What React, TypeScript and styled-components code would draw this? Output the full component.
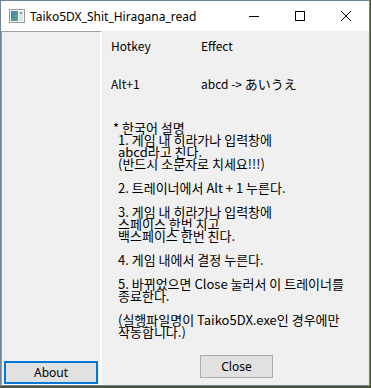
import React from 'react'
import styled, { createGlobalStyle } from 'styled-components'

const GlobalStyle = createGlobalStyle`
  html, body {
    margin: 0;
    padding: 0;
    background: #4a5637;
  }
  body {
    width: 371px;
    height: 388px;
    overflow: hidden;
  }
`

const Window = styled.div`
  width: 370px;
  height: 386px;
  box-sizing: border-box;
  border: 1px solid #6f8398;
  background: #fff;
  display: flex;
  flex-direction: column;
`

const TitleBar = styled.div`
  height: 30px;
  flex-shrink: 0;
  display: flex;
  align-items: center;
  background: #fff;
`

const AppIcon = styled.svg`
  margin-left: 8px;
  flex-shrink: 0;
`

const Title = styled.span`
  margin-left: 5px;
  font: 12px 'Noto Sans', 'Open Sans', sans-serif;
  color: #000;
`

const Controls = styled.div`
  margin-left: auto;
  display: flex;
  height: 100%;
`

const CaptionButton = styled.div`
  width: 46px;
  height: 100%;
  display: flex;
  align-items: center;
  justify-content: center;
`

const Client = styled.div`
  flex: 1;
  display: flex;
  background: #f0f0f0;
`

const SidePane = styled.div`
  width: 101px;
  box-sizing: border-box;
  border-top: 1px solid #a0a0a0;
  border-left: 1px solid #a0a0a0;
  border-right: 2px solid #fff;
  border-bottom: 1px solid #fff;
  display: flex;
  flex-direction: column;
  justify-content: flex-end;
  padding-left: 2px;
`

const MainPane = styled.div`
  flex: 1;
  display: flex;
  flex-direction: column;
  padding: 9px 0 0 9px;
  font: 12px/12px 'Noto Sans CJK KR', 'Noto Sans CJK JP', sans-serif;
  color: #000;
`

const HotkeyTable = styled.div`
  display: grid;
  grid-template-columns: 90px auto;
  row-gap: 26px;
`

const Kana = styled.span`
  font-size: 13px;
`

const Notes = styled.div`
  margin: 32px 0 0 7px;
  font-size: 13px;
  white-space: pre;
  text-indent: -5px;
`

const PushButton = styled.button<{ $focused?: boolean }>`
  box-sizing: border-box;
  height: 23px;
  padding: 0;
  background: #e1e1e1;
  border: ${({ $focused }) => ($focused ? '2px solid #0078d7' : '1px solid #adadad')};
  border-radius: 0;
  font: 12px 'Noto Sans', 'Open Sans', sans-serif;
  color: #000;
  display: flex;
  align-items: center;
  justify-content: center;
`

const AboutButton = styled(PushButton)`
  width: 94px;
`

const CloseButton = styled(PushButton)`
  width: 73px;
  margin: 17px 0 0 89px;
`

const notes = `* 한국어 설명
1. 게임 내 히라가나 입력창에
abcd라고 친다.
(반드시 소문자로 치세요!!!)

2. 트레이너에서 Alt + 1 누른다.

3. 게임 내 히라가나 입력창에
스페이스 한번 치고
백스페이스 한번 친다.

4. 게임 내에서 결정 누른다.

5. 바뀌었으면 Close 눌러서 이 트레이너를
종료한다.

(실행파일명이 Taiko5DX.exe인 경우에만
작동합니다.)`

const App: React.FC = () => {
  return (
    <>
      <GlobalStyle />
      <Window>
        <TitleBar>
          <AppIcon width="16" height="14" viewBox="0 0 16 14">
            <defs>
              <linearGradient id="ig" x1="0" y1="0" x2="1" y2="1">
                <stop offset="0" stopColor="#3a7fc0" />
                <stop offset="1" stopColor="#5fae6e" />
              </linearGradient>
            </defs>
            <rect x="0.5" y="0.5" width="15" height="13" fill="#f4f4f4" stroke="#9a9a9a" />
            <rect x="2" y="2" width="7" height="10" fill="url(#ig)" />
            <rect x="10" y="2" width="4" height="10" fill="#dfe6ea" />
            <rect x="11" y="3" width="2" height="2" fill="#7da46a" />
          </AppIcon>
          <Title>Taiko5DX_Shit_Hiragana_read</Title>
          <Controls>
            <CaptionButton>
              <svg width="10" height="10" viewBox="0 0 10 10">
                <path d="M0 5.5h10" stroke="#000" strokeWidth="1" />
              </svg>
            </CaptionButton>
            <CaptionButton>
              <svg width="10" height="10" viewBox="0 0 10 10">
                <rect x="0.5" y="0.5" width="9" height="9" fill="none" stroke="#000" strokeWidth="1" />
              </svg>
            </CaptionButton>
            <CaptionButton>
              <svg width="10" height="10" viewBox="0 0 10 10">
                <path d="M0 0L10 10M10 0L0 10" stroke="#000" strokeWidth="1" />
              </svg>
            </CaptionButton>
          </Controls>
        </TitleBar>
        <Client>
          <SidePane>
            <AboutButton $focused>About</AboutButton>
          </SidePane>
          <MainPane>
            <HotkeyTable>
              <span>Hotkey</span>
              <span>Effect</span>
              <span>Alt+1</span>
              <span>
                abcd -&gt; <Kana>あいうえ</Kana>
              </span>
            </HotkeyTable>
            <Notes>{notes}</Notes>
            <CloseButton>Close</CloseButton>
          </MainPane>
        </Client>
      </Window>
    </>
  )
}

export default App
